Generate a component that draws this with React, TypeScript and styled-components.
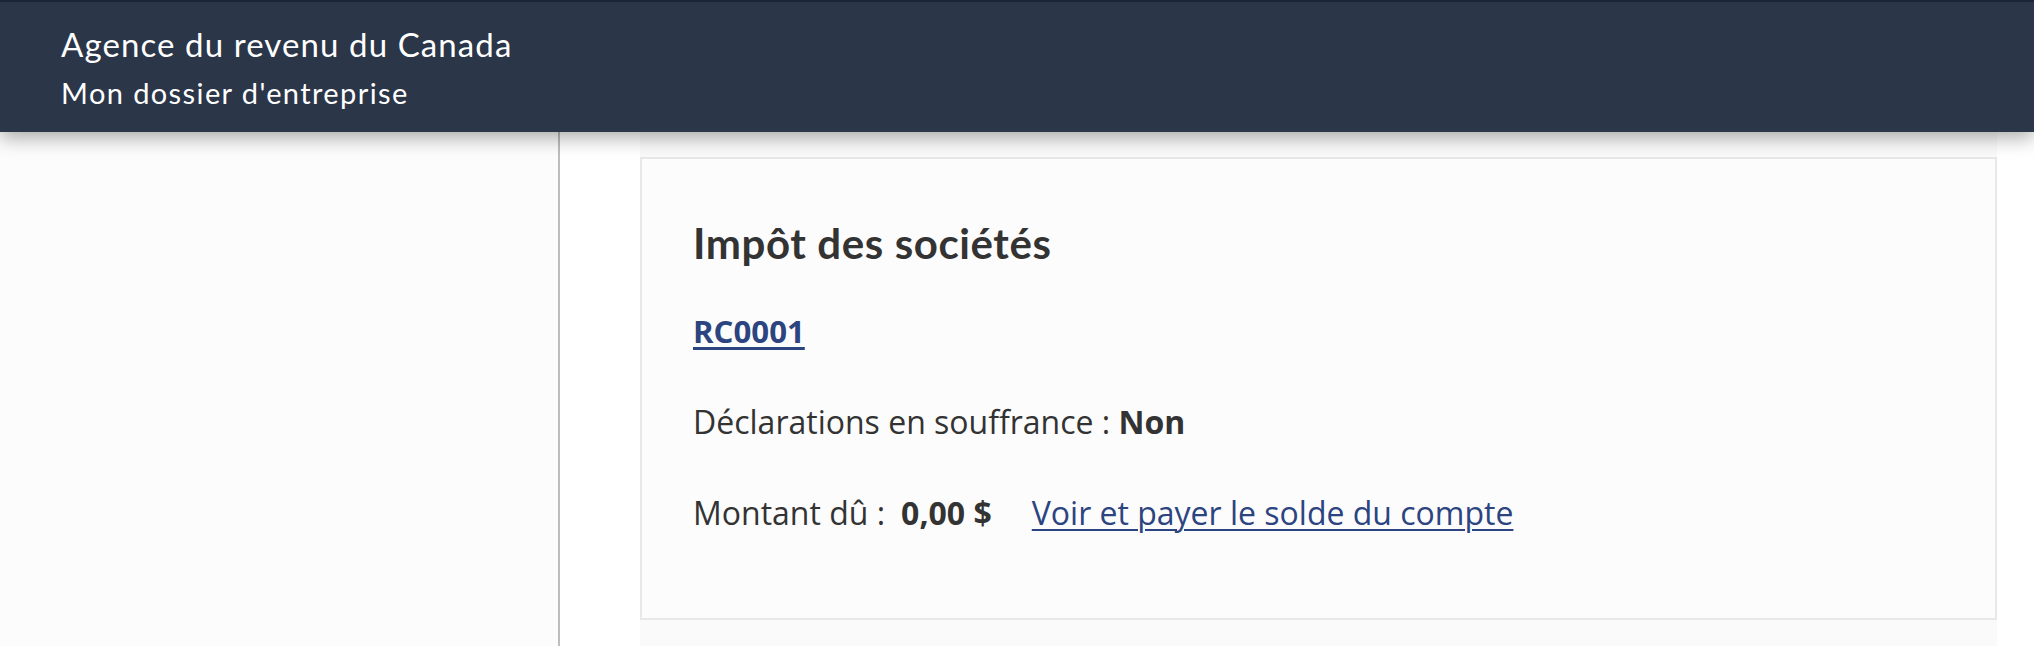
import React from "react";
import styled, { createGlobalStyle } from "styled-components";

const GlobalStyle = createGlobalStyle`
  html, body {
    margin: 0;
    padding: 0;
    background: #ffffff;
  }
  body {
    font-family: "Open Sans", "Liberation Sans", sans-serif;
    color: #333333;
  }
  * { box-sizing: border-box; }
`;

const Page = styled.div`
  display: flex;
  flex-direction: column;
  min-height: 100vh;
`;

const Header = styled.header`
  position: relative;
  z-index: 2;
  height: 132px;
  background: #2b3649;
  border-top: 2px solid #1c2536;
  box-shadow: 0 6px 18px rgba(0, 0, 0, 0.32);
  padding: 22px 0 0 61px;
  display: flex;
  flex-direction: column;
  font-family: Lato, "Open Sans", sans-serif;
  color: #ffffff;
`;

const Agency = styled.div`
  font-size: 33px;
  line-height: 40px;
  letter-spacing: 1.1px;
  margin-bottom: 11px;
`;

const AppName = styled.div`
  font-size: 29px;
  line-height: 35px;
  letter-spacing: 1.4px;
`;

const Body = styled.div`
  flex: 1;
  display: flex;
`;

const Sidebar = styled.aside`
  width: 560px;
  flex: none;
  background: #fcfcfc;
  border-right: 2px solid #bdbdbd;
`;

const Main = styled.main`
  flex: 1;
  display: flex;
  padding-left: 80px;
  background: #ffffff;
`;

const Column = styled.div`
  width: 1357px;
  flex: none;
  background: #fafafa;
  padding-top: 25px;
`;

const Card = styled.section`
  background: #fcfcfc;
  border: 2px solid #e8e8e8;
  padding: 59px 52px 38px 51px;
`;

const Title = styled.h2`
  margin: 0 0 40px;
  font-family: Lato, "Open Sans", sans-serif;
  font-weight: 700;
  font-size: 42px;
  line-height: 50px;
  letter-spacing: 0.6px;
  color: #333333;
`;

const Line = styled.p`
  margin: 0 0 44px;
  font-size: 32px;
  line-height: 46.8px;
  color: #333333;
`;

const Link = styled.a<{ $bold?: boolean; $gap?: number }>`
  color: #2c4480;
  text-decoration: underline;
  text-decoration-thickness: ${(p) => (p.$bold ? "3px" : "2px")};
  text-underline-offset: 4px;
  font-size: ${(p) => (p.$bold ? "31.2px" : "inherit")};
  font-weight: ${(p) => (p.$bold ? 700 : 400)};
  margin-left: ${(p) => p.$gap ?? 0}px;
  cursor: pointer;
`;

const Strong = styled.strong<{ $gap?: number }>`
  font-weight: 700;
  margin-left: ${(p) => p.$gap ?? 0}px;
`;

export default function App() {
  return (
    <>
      <GlobalStyle />
      <Page>
        <Header>
          <Agency>Agence du revenu du Canada</Agency>
          <AppName>Mon dossier d'entreprise</AppName>
        </Header>
        <Body>
          <Sidebar />
          <Main>
            <Column>
              <Card>
                <Title>Impôt des sociétés</Title>
                <Line>
                  <Link $bold href="#">RC0001</Link>
                </Line>
                <Line>
                  Déclarations en souffrance : <Strong>Non</Strong>
                </Line>
                <Line>
                  Montant dû :<Strong $gap={16}>0,00 $</Strong>
                  <Link $gap={40} href="#">Voir et payer le solde du compte</Link>
                </Line>
              </Card>
            </Column>
          </Main>
        </Body>
      </Page>
    </>
  );
}
